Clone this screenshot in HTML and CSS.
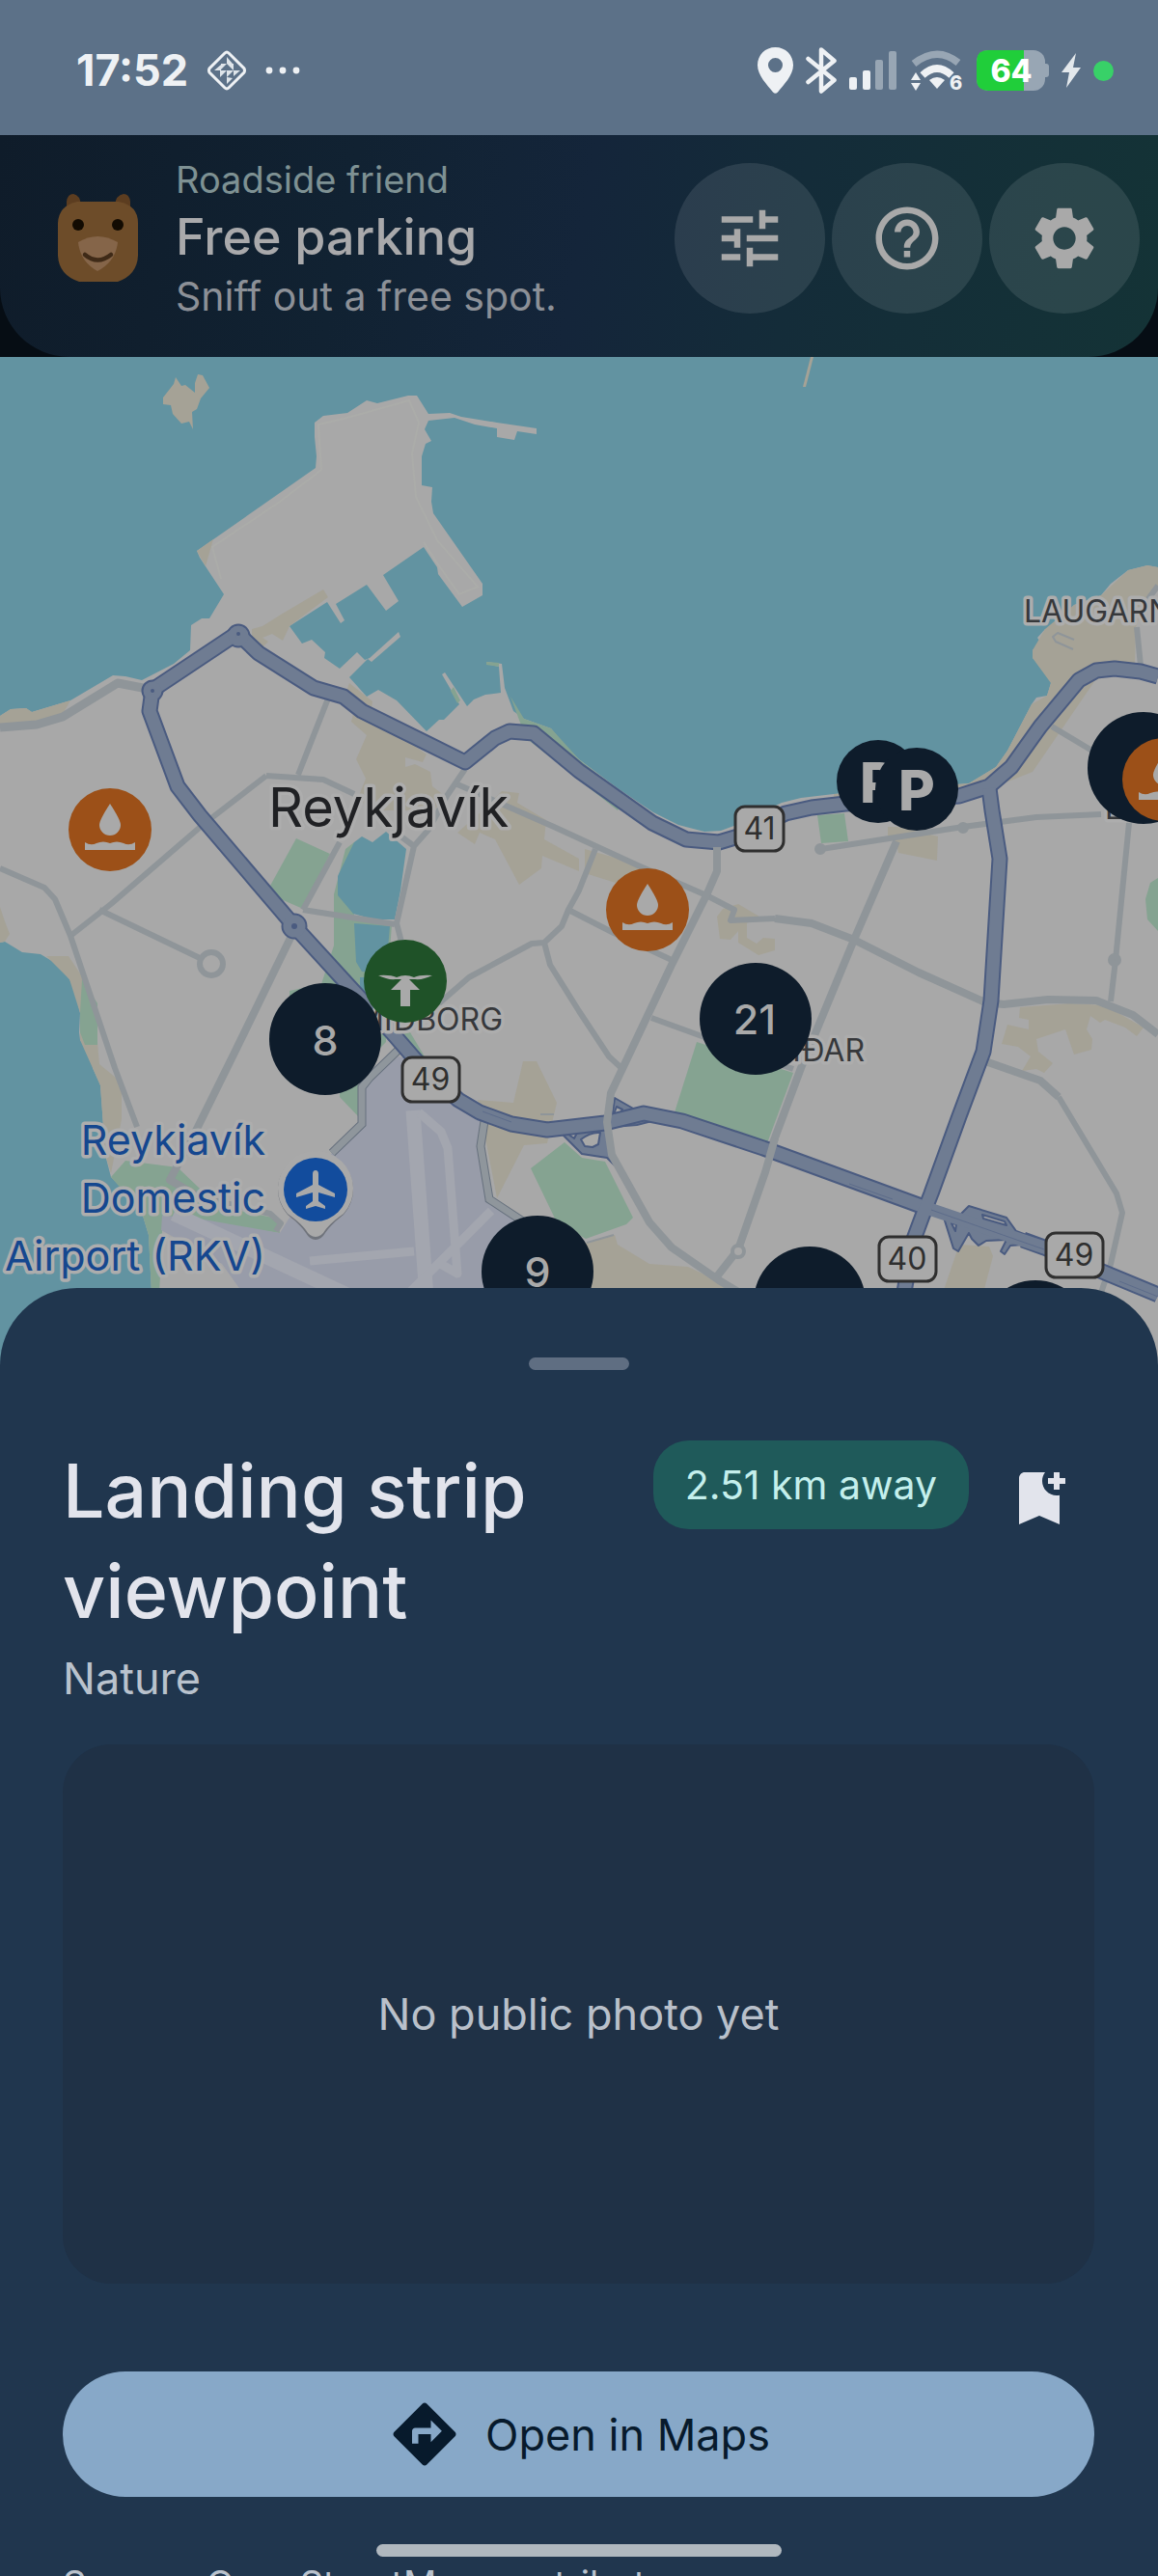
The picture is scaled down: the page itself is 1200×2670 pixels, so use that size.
FILE: index.html
```html
<!DOCTYPE html>
<html lang="en">
<head>
<meta charset="utf-8">
<meta name="viewport" content="width=device-width, initial-scale=1">
<title>Free parking</title>
<link rel="stylesheet" href="styles.css">
</head>
<body>
<div class="screen">
  <div class="status">
    <span class="status-time">17:52</span>
    <svg class="status-diamond" width="40" height="42" viewBox="0 0 40 42" aria-hidden="true">
      <path d="M18 3Q20 1 22 3L38 19Q39 21 38 23L22 39Q20 41 18 39L2 23Q1 21 2 19Z" fill="none" stroke="#eef1f4" stroke-width="3"/>
      <path d="M20 7v7h6zM20 14h-6v6zM20 14l7 7v-7zM14 21h-7l7-6zM13 21h7l-7 7zM20 21h7l-7 7zM27 21h7l-7 6zM20 28v7l6-6z" fill="#dfe5ea"/>
    </svg>
    <svg class="status-dots" width="36" height="8" viewBox="0 0 36 8" aria-hidden="true" fill="#eef1f4"><circle cx="4" cy="4" r="3.4"/><circle cx="18" cy="4" r="3.4"/><circle cx="32" cy="4" r="3.4"/></svg>
    <div class="status-icons">
      <svg width="37" height="48" viewBox="0 0 37 48" aria-hidden="true"><path fill-rule="evenodd" fill="#eef1f4" d="M18.500 0C8 0 0 8 0 18.500C0 29 10 39 16 46.500Q18.500 49 21 46.500C27 39 37 29 37 18.500C37 8 29 0 18.500 0ZM18.500 11a7.500 7.500 0 1 1 0 15a7.500 7.500 0 1 1 0-15Z"/></svg>
      <svg width="32" height="48" viewBox="0 0 32 48" aria-hidden="true"><path fill="none" stroke="#eef1f4" stroke-width="4.500" stroke-linejoin="round" stroke-linecap="round" d="M2.500 12L29.500 34L16 45.500V2.500L29.500 14L2.500 36"/></svg>
      <svg width="50" height="40" viewBox="0 0 50 40" aria-hidden="true"><rect y="27" width="8" height="13" rx="2" fill="#eef1f4"/><rect x="14" y="20" width="8" height="20" rx="2" fill="#eef1f4"/><rect x="27" y="9" width="8" height="31" rx="2" fill="#98a6b4"/><rect x="41" width="8" height="40" rx="2" fill="#98a6b4"/></svg>
      <svg width="56" height="42" viewBox="0 0 56 42" aria-hidden="true"><path d="M4 14Q28 -5 50 13" fill="none" stroke="#98a6b4" stroke-width="7.500"/><path d="M13 26Q28 12 43 26" fill="none" stroke="#eef1f4" stroke-width="7.500"/><path d="M20 31Q28 25 36 31L28 40Z" fill="#eef1f4"/><path d="M6 23l5 8H1zM1 34h10l-5 8z" fill="#eef1f4"/><text x="41" y="41" class="wifi-gen">6</text></svg>
      <svg width="75" height="42" viewBox="0 0 75 42" aria-hidden="true"><rect x="0" width="71" height="42" rx="12" fill="#98a6b4"/><rect x="68" y="14" width="7" height="14" rx="3" fill="#98a6b4"/><path d="M12 0H49V42H12Q0 42 0 30V12Q0 0 12 0Z" fill="#20ce3a"/><text x="36" y="33" class="battery-level">64</text></svg>
      <svg width="20" height="36" viewBox="0 0 20 36" aria-hidden="true"><path d="M15 0L0 20H8L5 36L20 15H12Z" fill="#e3e8ec"/></svg>
      <span class="status-live"></span>
    </div>
  </div>

  <div class="header-wrap">
    <header class="header">
      <svg class="avatar" width="84" height="92" viewBox="0 0 84 92" aria-hidden="true">
        <path d="M9 18V8Q10 0 16 0Q23 1 24 12L20 20ZM75 18V8Q74 0 68 0Q60 1 59 12L64 20Z" fill="#5c3d20"/>
        <path d="M20 8H63Q83 12 83 30V64Q82 84 62 91H22Q1 84 0 64V30Q1 12 20 8Z" fill="#6d4c29"/>
        <circle cx="21" cy="32" r="6" fill="#120b02"/><circle cx="62" cy="32" r="6" fill="#120b02"/>
        <path d="M21 50Q41 38 62 50Q60 70 41 80Q23 70 21 50Z" fill="#856549"/>
        <path d="M28 63Q41 74 55 63" fill="none" stroke="#3f2a17" stroke-width="4.500" stroke-linecap="round"/>
      </svg>
      <div class="header-text">
        <p class="header-kicker">Roadside friend</p>
        <h1 class="header-title">Free parking</h1>
        <p class="header-sub">Sniff out a free spot.</p>
      </div>
      <div class="header-actions">
        <button class="round" type="button" aria-label="Filters"><svg class="icon" viewBox="0 0 24 24" aria-hidden="true"><path d="M3 17v2h6v-2H3zM3 5v2h10V5H3zm10 16v-2h8v-2h-8v-2h-2v6h2zM7 9v2H3v2h4v2h2V9H7zm14 4v-2H11v2h10zm-6-4h2V7h4V5h-4V3h-2v6z"/></svg></button>
        <button class="round" type="button" aria-label="Help"><svg class="icon" viewBox="0 0 24 24" aria-hidden="true"><path d="M11 18h2v-2h-2v2zm1-16C6.480 2 2 6.480 2 12s4.480 10 10 10 10-4.480 10-10S17.520 2 12 2zm0 18c-4.410 0-8-3.590-8-8s3.590-8 8-8 8 3.590 8 8-3.590 8-8 8zm0-14c-2.210 0-4 1.790-4 4h2c0-1.100.9-2 2-2s2 .9 2 2c0 2-3 1.750-3 5h2c0-2.250 3-2.500 3-5 0-2.210-1.790-4-4-4z"/></svg></button>
        <button class="round" type="button" aria-label="Settings"><svg class="icon" viewBox="0 0 24 24" aria-hidden="true"><path d="M19.140 12.940c.04-.3.06-.61.06-.94 0-.32-.02-.64-.07-.94l2.030-1.580c.18-.14.230-.41.120-.61l-1.920-3.320c-.12-.22-.37-.29-.59-.22l-2.390.96c-.5-.38-1.030-.7-1.620-.94l-.36-2.540c-.04-.24-.24-.41-.48-.41h-3.840c-.24 0-.43.17-.47.410l-.36 2.540c-.59.24-1.130.57-1.620.94l-2.390-.96c-.22-.08-.47 0-.59.22L2.740 8.870c-.12.21-.08.47.12.61l2.030 1.580c-.05.3-.09.63-.09.94s.02.640.07.940l-2.030 1.580c-.18.14-.23.41-.12.610l1.920 3.320c.12.220.37.290.59.220l2.390-.96c.5.38 1.030.7 1.620.94l.36 2.540c.05.240.24.410.48.410h3.840c.24 0 .44-.17.470-.41l.36-2.540c.59-.24 1.130-.56 1.620-.94l2.390.96c.22.080.47 0 .59-.22l1.920-3.320c.12-.22.070-.47-.12-.61l-2.010-1.580zM12 15.600c-1.980 0-3.600-1.620-3.600-3.600s1.620-3.600 3.600-3.600 3.600 1.620 3.600 3.600-1.620 3.600-3.600 3.600z"/></svg></button>
      </div>
    </header>
  </div>

  <svg class="map" viewBox="0 370 1200 1045" role="img" aria-label="Map of Reykjavík">
    <defs>
      <g id="spring"><circle r="43" fill="#9c5018"/><path d="M0-27Q11-10 11-5A11 11 0 0 1-11-5Q-11-10 0-27Z" fill="#a9a9a9"/><path d="M-26 13Q-20 17-14 14Q-7 11 0 14Q7 11 14 14Q20 17 26 13V21H-26Z" fill="#a9a9a9"/></g>
    </defs>
    <rect y="370" width="1200" height="1045" fill="#6293a1"/>

    <!-- land -->
    <path class="land" d="M0 742L11 735L27 734L33 738L73 726L117 700L130 701L147 705L180 688L197 674L198 648L209 641L217 641L232 616L207 578L204 571L327 485L328 473L326 453V438L335 431L360 428L380 415L391 418L423 410H432L444 429L466 428L478 432L515 438L556 444V450L536 447L533 456L515 453V444L492 440L471 433L444 436L440 445L447 457L441 460L437 473V503L448 505L447 520L449 532L500 605V617L479 629L454 595L453 588L439 567L397 596L413 623L400 633L380 606L348 626L357 643L353 646L339 624L300 649L313 667L323 663L337 676L336 682L352 693L370 676L378 684L383 682L413 655L415 660L385 686L381 683L362 702L380 722L392 715L411 726L442 758L455 746H460L476 730L458 699L461 697L484 732L491 725L503 720L519 718L517 691L504 688V686L520 688L523 713L532 737L543 745L571 755L585 772L600 787L640 817L677 842L703 855L730 862L747 861L763 855L810 832L830 827L864 823L1004 812L1032 795L1044 778L1069 730L1074 723L1085 721L1089 708L1088 697L1070 682V674L1078 665L1075 661L1083 652L1094 649L1113 627L1141 617L1151 605L1169 591L1189 586L1200 588V1415H0Z"/>
    <path fill="#6293a1" d="M0 977L5 976L23 987L42 989L57 998L72 1015L78 1027L83 1050L82 1070L83 1078L95 1093L96 1107L104 1125L106 1153L109 1197L115 1220L132 1237L147 1257L154 1280L157 1340V1415H0Z"/>
    <path class="shore" d="M333 487L330 440L360 433L424 415L434 438L427 470L431 515L453 560L495 608L476 616L454 585L439 562M229 600L220 567L290 520L333 487"/>

    <!-- built-up and sandy areas -->
    <g class="sand">
      <path d="M182 391L188 400L192 399L202 407V397L205 388L210 389L217 402L208 413L204 424L199 427L200 445L196 437L188 439L179 429L177 420L169 419V412L180 398Z"/>
      <path d="M840 370H843L835 401H832Z"/>
      <path d="M335 611L340 619L300 649L293 664L282 657L272 661L278 665L272 671L261 665V652L272 649L291 637Z"/>
      <path d="M204 571L221 559L213 587Z"/>
      <path d="M362 708L386 727L384 740L442 782L438 790L420 785V795L430 792L446 800L448 815L461 825L450 840H385L371 827L379 807L369 787L380 762L364 748L367 736L357 722Z"/>
      <path d="M520 820L538 822L536 832L566 850L564 870L600 890V903L562 887L561 900L538 917L513 870L497 863L492 875L474 863L500 840Z"/>
      <path d="M606 880L634 888L676 900V915L638 915L606 905Z"/>
      <path d="M765 937L787 950L774 957V972L784 978L791 972L803 973V985L786 990L765 977V965L757 974L746 973L743 950L749 942Z"/>
      <path d="M920 857H930L972 867L971 892L931 884L929 873L920 868Z"/>
      <path d="M1057 1044L1109 1040L1145 1042L1185 1065L1178 1074L1166 1065L1145 1057L1140 1060L1130 1053L1126 1067L1132 1077L1131 1088L1113 1093L1104 1067L1074 1077L1076 1090L1091 1102L1082 1112L1074 1108L1059 1110L1068 1095L1055 1085L1038 1082L1044 1062L1066 1067V1057L1056 1055Z"/>
      <path d="M607 1288L637 1280L640 1290L673 1310L713 1313L770 1340V1415H600V1310Z"/>
      <path d="M542 1100H556L577 1143L567 1185L543 1187L515 1242L503 1180L495 1140L532 1143Z"/>
      <path d="M994 1290L1025 1292L1029 1302L1019 1340H977Z"/>
      <path d="M1004 812L1032 795L1044 778L1069 730L1085 721L1089 708L1070 682V674L1083 652L1113 627L1141 617L1169 591L1189 586L1200 588V612L1187 622L1177 650L1176 690L1135 705L1070 800L1005 826L864 830V823Z"/>
      <path d="M48 991H71L85 1012L101 1080L103 1103L126 1122V1160L115 1216L109 1197L106 1153L104 1125L96 1107L83 1078V1050L72 1015Z"/>
      <path d="M0 742L11 735L27 734L33 738L73 726L65 740L38 747L0 750Z"/>
      <path d="M0 940L5 955L10 968L5 976L0 977Z"/>
    </g>

    <!-- parks -->
    <g class="park">
      <path d="M307 869L342 885L314 942L291 932L280 918Z"/>
      <path d="M358 880L367 873V950L406 958L404 985V1060L352 1050L300 1050V1027L333 1020L346 980V927Z"/>
      <path d="M352 1137L371 1157V1110L400 1080V1062L352 1062Z"/>
      <path d="M405 1073L425 1070L440 1095L432 1100Z"/>
      <path d="M722 1080L822 1112L795 1185L699 1153Z"/>
      <path d="M585 1184L603 1200L627 1204L656 1262L649 1269L607 1284L577 1267L550 1211Z"/>
      <path d="M847 845L875 843L879 872L851 874Z"/>
      <path d="M1200 910L1192 915L1187 932L1189 953L1200 965Z"/>
      <path d="M529 722L543 745L571 755L600 787L649 825L640 840L545 765Z"/>
      <path d="M504 686L517 687V691L504 689ZM470 712L477 726L474 729L467 716Z"/>
      <path d="M85 1015L101 1040V1083H88L83 1070V1050Z"/>
      <path d="M115 1220L130 1203L184 1210L226 1250L287 1263L290 1278L168 1260V1287L165 1340H157L154 1280L147 1257Z"/>
    </g>

    <!-- lake -->
    <path fill="#6293a1" d="M367 873L375 867L386 873L400 862L421 880L415 923L409 953H388L366 947L350 928V908ZM367 957L404 960L402 983L395 1010L375 1007L369 997ZM373 1013H385V1028H373Z"/>

    <!-- airport grounds -->
    <path fill="#989ca9" d="M413 1095L390 1113L378 1127V1167L344 1195L320 1230L290 1278L200 1262L168 1260L167 1275L230 1310L255 1345H560V1300L536 1263L505 1245L497 1188L501 1163L467 1142L432 1100Z"/>
    <g class="runway">
      <path stroke-width="15" d="M428 1151L442 1345M180 1258L360 1342"/>
      <path stroke-width="9" d="M434 1153L457 1173L464 1190L474 1320L453 1308M321 1307L429 1297M509 1255L419 1345"/>
    </g>

    <!-- local roads -->
    <g class="road">
      <path stroke-width="9" d="M0 754L38 751L65 743L122 708L153 714"/>
      <path d="M340 724L309 803M276 804L335 808L367 823M276 804L210 855L115 937L73 970"/>
      <path d="M0 900L46 920L57 932L73 970L119 1107L142 1168M103 943L207 993"/>
      <circle cx="219" cy="999" r="12"/>
      <path d="M352 873L314 943M314 943L409 958"/>
      <path class="wide" d="M302 970L245 1087L205 1168L176 1223L205 1240"/>
      <path d="M205 1240L280 1258L291 1268L286 1276"/>
      <path d="M482 797L463 825L444 860L429 877L411 957L417 980M429 877L406 860"/>
      <path d="M474 813L574 857L661 897L732 928L761 943L757 954L803 952"/>
      <path class="wide" d="M803 952L841 957L885 974L952 1008L1021 1039L1040 1041L1086 1036L1136 1037L1174 1052L1200 1072"/>
      <path d="M617 880L600 923L589 943L582 960L564 977L551 978L486 1013L455 1040M564 977L570 1000L600 1048L631 1095L644 1107M589 943L636 967L696 995"/>
      <path d="M675 1055L730 1075L822 1108"/>
      <path d="M851 880L998 857L1074 847L1141 844"/>
      <circle cx="850" cy="880" r="3"/><circle cx="998" cy="858" r="3"/>
      <path class="wide" d="M929 872L885 974L830 1107L799 1190"/>
      <path d="M1170 853L1156 995L1151 1038"/>
      <circle cx="1155" cy="995" r="4"/>
      <path class="wide" d="M1021 1100L1078 1120L1097 1137"/>
      <path d="M1097 1137L1157 1237L1163 1257L1151 1310L1141 1340"/>
      <path d="M1178 650L1182 690M1200 607L1189 622M1090 753L1135 780"/>
      <path class="thin" d="M1113 663L1096 656L1091 660L1094 665L1112 673M608 1288L636 1280M560 1155H574"/>
    </g>
    <path class="outline-case" d="M502 1162L498 1188L507 1243L545 1268M413 1088L383 1117L375 1127V1165L344 1195"/>
    <path class="outline-fill" d="M502 1162L498 1188L507 1243L545 1268M413 1088L383 1117L375 1127V1165L344 1195"/>

    <!-- interchanges -->
    <g class="junction">
      <path d="M580 1173L603 1196L629 1200L637 1208L632 1185L634 1160L637 1138L658 1150L695 1157L660 1166L610 1170Z"/>
      <path class="island" d="M602 1181Q612 1173 622 1174L620 1186L614 1189L606 1188ZM588 1175L598 1174L595 1180ZM636 1155L639 1147L645 1150L641 1156Z"/>
      <path d="M992 1262L1004 1250L1043 1262L1053 1276L1090 1290L1060 1290L1047 1291L1041 1300L1037 1297L1043 1285L1022 1286L1014 1291L1007 1284L1004 1278L993 1297L988 1294L978 1262Z"/>
      <path class="island" d="M1018 1259L1041 1266L1043 1270L1019 1263ZM986 1268L991 1269L990 1276Z"/>
    </g>

    <!-- main roads: dark casing under a lighter fill -->
    <g class="main-case">
      <path d="M245 657L158 715L155 737L184 815L207 845L305 960L369 1030L406 1070L432 1100L475 1140L497 1153L530 1165L567 1171L627 1164L667 1154L707 1162L791 1190L960 1252"/>
      <path d="M247 657L268 677L325 713L356 722L375 737L482 790L513 765L528 758L553 760L600 799L676 853L711 870L745 873L765 867L814 843L841 837L876 833L994 825L1025 815L1048 795L1078 753L1118 705L1136 695L1155 693L1182 696L1200 701"/>
      <path d="M1025 817L1028 840L1036 890L1027 1037L1019 1090L994 1157L965 1237L956 1260L946 1287L936 1345"/>
      <path d="M1060 1285L1082 1293L1200 1342"/>
      <circle cx="247" cy="659" r="4"/><circle cx="158" cy="716" r="3"/><circle cx="305" cy="960" r="5"/>
    </g>
    <g class="main-fill">
      <path d="M245 657L158 715L155 737L184 815L207 845L305 960L369 1030L406 1070L432 1100L475 1140L497 1153L530 1165L567 1171L627 1164L667 1154L707 1162L791 1190L960 1252L1082 1293L1200 1342"/>
      <path d="M247 657L268 677L325 713L356 722L375 737L482 790L513 765L528 758L553 760L600 799L676 853L711 870L745 873L765 867L814 843L841 837L876 833L994 825L1025 815L1048 795L1078 753L1118 705L1136 695L1155 693L1182 696L1200 701"/>
      <path d="M1025 817L1028 840L1036 890L1027 1037L1019 1090L994 1157L965 1237L956 1260L946 1287L936 1345"/>
      <circle cx="247" cy="659" r="4"/><circle cx="158" cy="716" r="3"/><circle cx="305" cy="960" r="5"/>
    </g>
    <g fill="#4a5b80"><circle cx="247" cy="657" r="2"/><circle cx="158" cy="716" r="2"/><circle cx="305" cy="960" r="3"/></g>
    <path class="median" d="M880 1227L925 1243M965 1254L1082 1295M1160 1328L1200 1344M500 1152L530 1163"/>

    <!-- local roads crossing above the highway -->
    <g class="road">
      <path class="wide" d="M743 878V903L732 928L696 1000L633 1133L629 1163L634 1197L673 1267L696 1293L745 1327L775 1345"/>
      <path class="wide" d="M803 1180L793 1215L765 1295L743 1323"/>
    </g>
    <circle cx="765" cy="1297" r="6" fill="#a8a8a8" stroke="#8f9599" stroke-width="4"/>

    <!-- place names -->
    <text class="city" x="278" y="857">Reykjavík</text>
    <g class="district">
      <text x="1061" y="645">LAUGARNES</text>
      <text x="1145" y="849">LAUGARDALUR</text>
      <text x="521" y="1068" text-anchor="end">MIÐBORG</text>
      <text x="896" y="1100" text-anchor="end">HLÍÐAR</text>
    </g>
    <g class="airport">
      <text x="275" y="1197">Reykjavík</text>
      <text x="275" y="1257">Domestic</text>
      <text x="275" y="1317">Airport (RKV)</text>
    </g>

    <!-- route shields -->
    <g class="shield">
      <rect x="762" y="836" width="50" height="46" rx="10"/><text x="787" y="870">41</text>
      <rect x="417" y="1096" width="59" height="46" rx="10"/><text x="446" y="1130">49</text>
      <rect x="911" y="1282" width="59" height="46" rx="10"/><text x="940" y="1316">40</text>
      <rect x="1084" y="1278" width="59" height="46" rx="10"/><text x="1113" y="1312">49</text>
    </g>

    <!-- airport pin -->
    <g transform="translate(327 1233)">
      <path d="M0 52Q-6 52-10 45Q-16 36-29 26A39 39 0 1 1 29 26Q16 36 10 45Q6 52 0 52Z" fill="#70747c"/>
      <path d="M0 49Q-6 49-10 42Q-16 34-29 25A39 39 0 1 1 29 25Q16 34 10 42Q6 49 0 49Z" fill="#a9a9a9"/>
      <circle r="33" fill="#124c9d"/>
      <path d="M0-20Q3-20 3-16V-5L20 4V8L3 3V12L10 17V20L0 17L-10 20V17L-3 12V3L-20 8V4L-3-5V-16Q-3-20 0-20Z" fill="#a9a9a9"/>
    </g>

    <!-- parking and sight markers -->
    <use href="#spring" x="114" y="860"/>
    <use href="#spring" x="671" y="943"/>
    <g transform="translate(420 1017)"><circle r="43" fill="#1f5228"/><path d="M-28-6Q-16-7-9-4Q0-8 9-4Q16-7 28-6Q18-1 10-2L4-2L15 9H5V26H-5V9H-15L-4-2H-10Q-18-1-28-6Z" fill="#a9a9a9"/></g>
    <g class="marker">
      <circle cx="337" cy="1077" r="58"/><text x="337" y="1094">8</text>
      <circle cx="783" cy="1056" r="58"/><text x="782" y="1072">21</text>
      <circle cx="557" cy="1318" r="58"/><text x="557" y="1334">9</text>
      <circle cx="839" cy="1350" r="58"/>
      <circle cx="1073" cy="1385" r="58"/>
      <circle cx="1185" cy="796" r="58"/>
      <circle cx="910" cy="810" r="43"/><text class="parking" x="910" y="832">P</text>
      <circle cx="950" cy="818" r="43"/><text class="parking" x="950" y="840">P</text>
    </g>
    <use href="#spring" x="1206" y="808"/>
  </svg>

  <main class="sheet">
    <div class="handle"></div>
    <div class="place-head">
      <h2 class="place-title">Landing strip viewpoint</h2>
      <span class="chip">2.51 km away</span>
      <button class="save" type="button" aria-label="Save place"><svg width="72" height="72" viewBox="0 0 24 24" aria-hidden="true"><path d="M21 7h-2v2h-2V7h-2V5h2V3h2v2h2v2zM19 21l-7-3-7 3V5c0-1.100.9-2 2-2h7c-.63.84-1 1.870-1 3 0 2.760 2.240 5 5 5 .34 0 .68-.03 1-.1V21z" fill="#e2e4ec"/></svg></button>
    </div>
    <p class="place-kind">Nature</p>
    <div class="photo">No public photo yet</div>
    <button class="open-maps" type="button">
      <svg width="78" height="78" viewBox="0 0 24 24" aria-hidden="true"><path fill="#071a2c" d="M21.710 11.290l-9-9c-.39-.39-1.020-.39-1.410 0l-9 9c-.39.39-.39 1.020 0 1.410l9 9c.39.39 1.020.39 1.410 0l9-9c.39-.38.39-1.010 0-1.410zM14 14.500V12h-4v3H8v-4c0-.55.450-1 1-1h5V7.500l3.500 3.500-3.500 3.500z"/></svg>
      <span>Open in Maps</span>
    </button>
    <p class="source">Source: OpenStreetMap contributors</p>
  </main>
  <div class="home-bar"></div>
</div>
</body>
</html>
```
FILE: styles.css
```css
* { box-sizing: border-box; }

body {
  margin: 0;
  font-family: Inter, "Noto Sans", sans-serif;
}

h1, h2, p { margin: 0; font-weight: 400; }

button {
  border: 0;
  padding: 0;
  font: inherit;
  cursor: pointer;
}

.screen {
  position: relative;
  display: flex;
  flex-direction: column;
  height: 100vh;
  overflow: hidden;
  background: #20364e;
}

/* status bar */
.status {
  display: flex;
  flex: none;
  align-items: center;
  height: 140px;
  padding: 6px 46px 0 79px;
  background: #5c7188;
}

.status-time {
  font-size: 45px;
  font-weight: 700;
  line-height: 60px;
  color: #eef1f4;
}

.status-diamond { margin-left: 20px; }
.status-dots { margin-left: 20px; }

.status-icons {
  display: flex;
  align-items: center;
  gap: 13px;
  margin-left: auto;
}

.status-live {
  width: 21px;
  height: 21px;
  border-radius: 50%;
  background: #38d168;
}

.wifi-gen { font-size: 20px; font-weight: 800; fill: #eef1f4; }
.battery-level { font-size: 32px; font-weight: 800; fill: #fff; text-anchor: middle; }

/* header */
.header-wrap { flex: none; background: #060d14; }

.header {
  display: flex;
  align-items: center;
  padding: 22px 19px 38px 60px;
  border-radius: 0 0 72px 72px;
  background: linear-gradient(100deg, #0f1c2a, #112232 30%, #14253a 50%, #142c39 68%, #143336);
}

.avatar { flex: none; }
.header-text { flex: 1; padding-left: 38px; }
.header-kicker { font-size: 38px; line-height: 48px; color: #7e9193; }
.header-title { font-size: 52px; font-weight: 500; line-height: 72px; color: #a9a9ab; }
.header-sub { font-size: 41px; line-height: 50px; color: #8c9097; }

.header-actions { display: flex; gap: 7px; }

.round {
  display: grid;
  place-items: center;
  width: 156px;
  height: 156px;
  border-radius: 50%;
  background: rgba(255, 255, 255, 0.1);
}

.icon { width: 78px; height: 78px; fill: #a9a9a9; }

/* map */
.map { display: block; flex: none; width: 100%; }
.land { fill: #a8a8a8; }
.shore { fill: none; stroke: #abaca9; stroke-width: 2; }
.sand { fill: #a5a296; }
.park { fill: #85a391; }
.runway { fill: none; stroke: #a3a6af; stroke-linejoin: round; }
.road { fill: none; stroke: #8f9599; stroke-width: 6; stroke-linejoin: round; }
.road .wide { stroke-width: 8; }
.road .thin { stroke-width: 2; }
.outline-case { fill: none; stroke: #67717e; stroke-width: 9; }
.outline-fill { fill: none; stroke: #8f969c; stroke-width: 7; }
.main-case { fill: none; stroke: #4a5b80; stroke-width: 17; stroke-linejoin: round; }
.main-fill { fill: none; stroke: #6f7c92; stroke-width: 13; stroke-linejoin: round; }
.junction { fill: #6f7c92; stroke: #4a5b80; stroke-width: 2; stroke-linejoin: round; }
.junction .island { fill: #a8a8a8; }
.median { fill: none; stroke: #5d6c8a; stroke-width: 1; }

.city, .district, .airport {
  stroke: #adadad;
  stroke-width: 7px;
  stroke-linejoin: round;
  paint-order: stroke;
}

.city { font-size: 56px; fill: #202124; }
.district { font-size: 32px; fill: #36383b; }
.airport { font-size: 43px; fill: #15478f; text-anchor: end; }

.shield { fill: #a9a9a9; stroke: #2f2f2f; stroke-width: 3px; }
.shield text { font-size: 32px; fill: #2f2f2f; stroke: none; text-anchor: middle; }

.marker { fill: #0e1c2b; }
.marker text { font-size: 43px; font-weight: 500; fill: #a9a9a9; text-anchor: middle; }
.marker .parking { font-size: 58px; font-weight: 800; }

/* place sheet, its round corners lying over the map */
.sheet {
  position: relative;
  flex: none;
  margin-top: -80px;
  padding: 72px 66px 0 65px;
  border-radius: 80px 80px 0 0;
  background: #20364e;
}

.handle {
  width: 104px;
  height: 13px;
  margin: 0 auto 73px;
  border-radius: 7px;
  background: #5f6e82;
}

.place-head { display: flex; align-items: flex-start; gap: 16px; }

.place-title {
  flex: 1;
  font-size: 77px;
  font-weight: 500;
  line-height: 104px;
  color: #e2e4ec;
}

.chip {
  flex: none;
  padding: 0 33px;
  border-radius: 37px;
  font-size: 41px;
  line-height: 92px;
  color: #c4efec;
  background: #1f5a5a;
}

.save {
  display: grid;
  flex: none;
  place-items: center;
  width: 114px;
  height: 120px;
  background: none;
}

.place-kind { margin-top: 9px; font-size: 45px; line-height: 60px; color: #b9c2cd; }

.photo {
  display: grid;
  place-items: center;
  height: 559px;
  margin-top: 38px;
  border-radius: 50px;
  font-size: 45px;
  color: #b9c0ca;
  background: #1f3146;
}

.open-maps {
  display: flex;
  align-items: center;
  justify-content: center;
  gap: 24px;
  width: 100%;
  height: 130px;
  margin-top: 91px;
  border-radius: 65px;
  font-size: 45px;
  color: #071a2c;
  background: #87a8c8;
}

.source { margin-top: 60px; font-size: 38px; line-height: 60px; color: #b9c2cd; }

/* system gesture bar */
.home-bar {
  position: absolute;
  bottom: 20px;
  left: 50%;
  width: 420px;
  height: 13px;
  margin-left: -210px;
  border-radius: 7px;
  background: #b0b8bf;
}
```
